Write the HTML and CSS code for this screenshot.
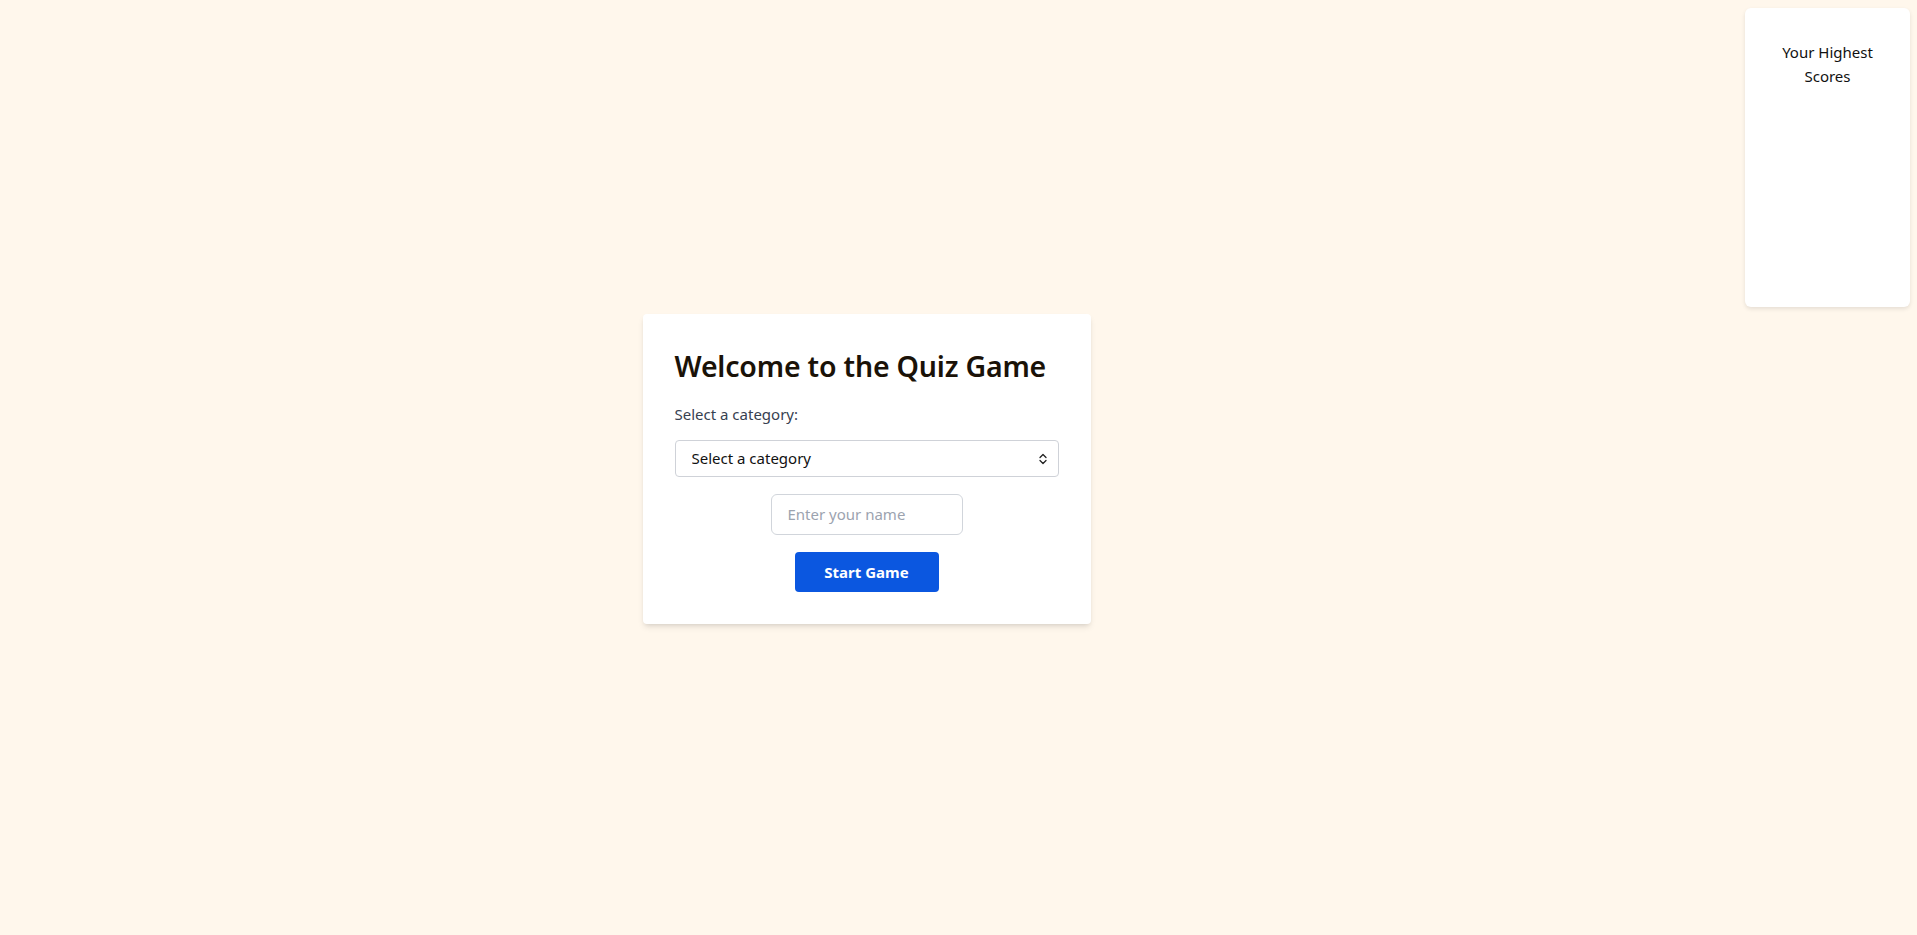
FILE: index.html
```html
<!DOCTYPE html>
<html lang="en">
<head>
<meta charset="utf-8">
<title>Quiz Game</title>
<link rel="stylesheet" href="styles.css">
</head>
<body>
<div class="page">
  <main class="main">
    <div class="card">
      <h1 class="title">Welcome to the Quiz Game</h1>
      <label class="label" for="cat">Select a category:</label>
      <div class="select-wrap">
        <select id="cat" class="select">
          <option>Select a category</option>
        </select>
        <svg class="chev" width="8" height="12" viewBox="0 0 8 12" aria-hidden="true"><path d="M1 4.5 L4 1.5 L7 4.5 M1 7.5 L4 10.5 L7 7.5" fill="none" stroke="#222" stroke-width="1.3" stroke-linecap="round" stroke-linejoin="round"/></svg>
      </div>
      <input class="name" type="text" placeholder="Enter your name">
      <button class="start">Start Game</button>
    </div>
  </main>
  <aside class="scores">
    <h2 class="scores-title">Your Highest Scores</h2>
  </aside>
</div>
</body>
</html>
```
FILE: styles.css
```css
* { box-sizing: border-box; }
html, body { margin: 0; padding: 0; }
body {
  background: #fff7ec;
  font-family: "Noto Sans", "Open Sans", sans-serif;
  color: #111;
  height: 935px;
  overflow: hidden;
}
.page {
  display: flex;
  height: 100%;
}
.main {
  flex: 1;
  display: flex;
  align-items: center;
  justify-content: center;
  padding-right: 12px;
}
.card {
  width: 448px;
  background: #fff;
  border-radius: 4px;
  padding: 32px;
  box-shadow: 0 4px 6px -1px rgba(0,0,0,0.1), 0 2px 4px -2px rgba(0,0,0,0.1);
  display: flex;
  flex-direction: column;
  margin-top: 2px;
}
.title {
  margin: 0 0 16px;
  font-size: 28.5px;
  line-height: 40px;
  font-weight: 600;
  color: #1a1208;
  letter-spacing: -0.2px;
}
.label {
  font-size: 15px;
  line-height: 24px;
  color: #374151;
  margin-bottom: 14px;
}
.select-wrap {
  position: relative;
  width: 384px;
  height: 37px;
}
.select {
  appearance: none;
  -webkit-appearance: none;
  width: 100%;
  height: 37px;
  border: 1px solid #cfd2d8;
  border-radius: 4px;
  background: #fff;
  font-family: inherit;
  font-size: 15px;
  color: #111;
  padding: 0 16px;
}
.chev {
  position: absolute;
  right: 12px;
  top: 13px;
}
.name {
  align-self: center;
  width: 192px;
  height: 41px;
  margin-top: 17px;
  border: 1px solid #d1d5db;
  border-radius: 6px;
  padding: 0 16px;
  font-family: inherit;
  font-size: 15px;
  color: #111;
  background: #fff;
}
.name::placeholder { color: #9ca3af; }
.start {
  align-self: center;
  width: 144px;
  height: 40px;
  margin-top: 17px;
  background: #0b57e0;
  color: #fff;
  border: none;
  border-radius: 4px;
  font-family: inherit;
  font-size: 15px;
  font-weight: 700;
}
.scores {
  width: 165px;
  height: 299px;
  margin: 8px 7px 0 0;
  background: #fff;
  border-radius: 6px;
  box-shadow: 0 2px 4px rgba(0,0,0,0.1);
  padding: 32px 24px;
}
.scores-title {
  margin: 0;
  font-size: 15px;
  line-height: 24px;
  font-weight: 400;
  text-align: center;
  color: #111;
}
```
